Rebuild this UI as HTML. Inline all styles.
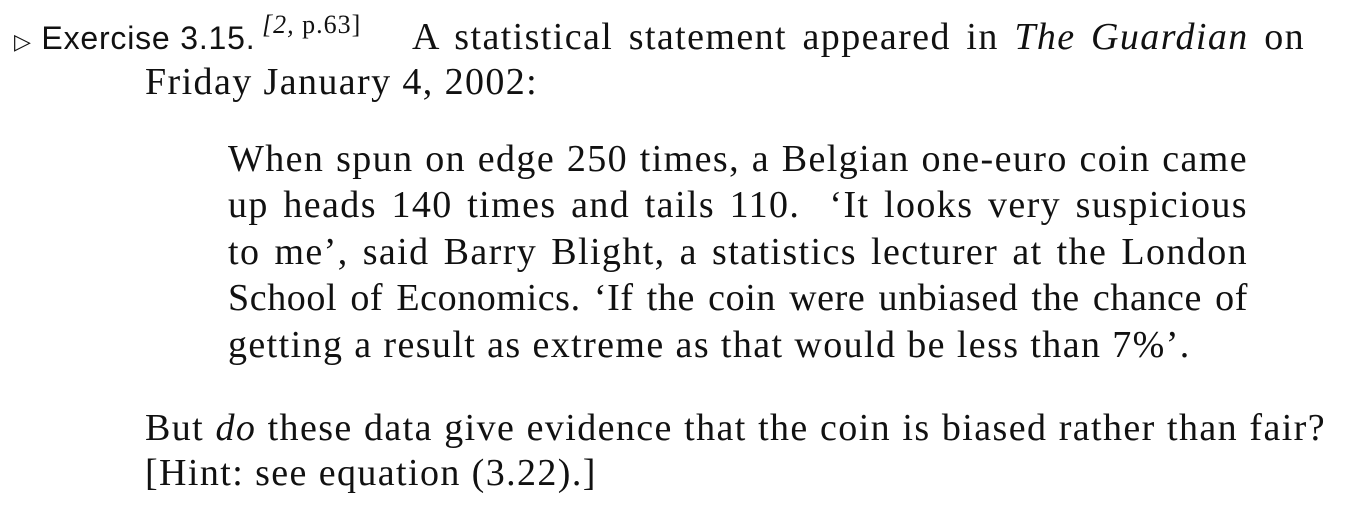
<!DOCTYPE html>
<html><head><meta charset="utf-8"><style>
body{margin:0;width:1346px;height:508px;background:#fff;overflow:hidden;position:relative;font-family:"Liberation Serif",serif;color:#111;}
.l{position:absolute;font-size:38px;letter-spacing:1.4px;line-height:46px;white-space:nowrap;}
.j{text-align:justify;text-align-last:justify;white-space:normal;}
.s{font-family:"Liberation Sans",sans-serif;font-size:32px;letter-spacing:0.8px;}
</style></head><body>
<div class="l s" style="left:14px;top:15px;"><span style="font-size:22px">&#9655;</span> Exercise 3.15.</div>
<div class="l" style="left:262px;top:2px;font-size:26px;letter-spacing:1px;"><i>[2,</i> p.63]</div>
<div class="l j" style="left:412px;top:14px;width:893px;">A statistical statement appeared in <i>The Guardian</i> on</div>
<div class="l" style="left:145px;top:59px;">Friday January 4, 2002:</div>
<div class="l j" style="left:228px;top:136px;width:1020px;">When spun on edge 250 times, a Belgian one-euro coin came</div>
<div class="l j" style="left:228px;top:182px;width:1020px;">up heads 140 times and tails 110. &nbsp;‘It looks very suspicious</div>
<div class="l j" style="left:228px;top:229px;width:1020px;">to me’, said Barry Blight, a statistics lecturer at the London</div>
<div class="l j" style="left:228px;top:275px;width:1020px;letter-spacing:0.6px;">School of Economics. ‘If the coin were unbiased the chance of</div>
<div class="l" style="left:228px;top:322px;">getting a result as extreme as that would be less than 7%’.</div>
<div class="l j" style="left:145px;top:405px;width:1181px;">But <i>do</i> these data give evidence that the coin is biased rather than fair?</div>
<div class="l" style="left:145px;top:450px;">[Hint: see equation (3.22).]</div>
</body></html>
